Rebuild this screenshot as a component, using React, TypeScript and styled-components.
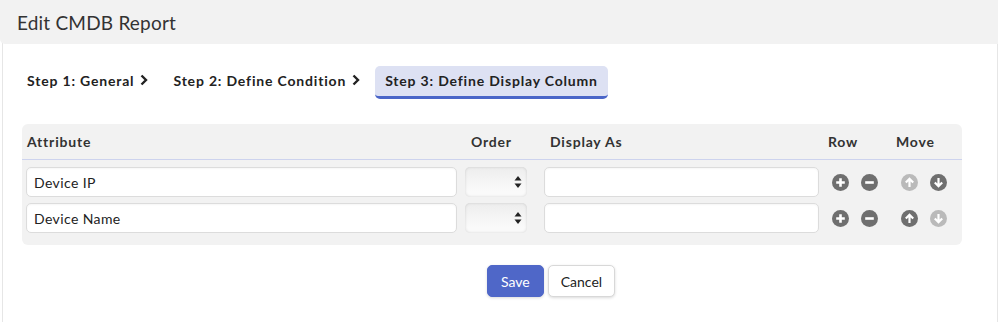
import styled, { createGlobalStyle } from "styled-components";

const GlobalStyle = createGlobalStyle`
  body {
    margin: 0;
    background: #ffffff;
    font-family: "Lato", "Open Sans", sans-serif;
    color: #222;
  }
`;

const Panel = styled.div`
  width: 996px;
  height: 322px;
  margin-left: 2px;
  border-left: 1px solid #e6e6e6;
  border-right: 1px solid #e6e6e6;
  box-sizing: border-box;
`;

const Header = styled.div`
  height: 44px;
  margin-left: -3px;
  margin-right: -1px;
  background: #f2f2f2;
  border-bottom-left-radius: 5px;
  display: flex;
  align-items: center;
  padding-left: 17px;
  font-size: 19px;
  letter-spacing: 0.2px;
  color: #333;
`;

const Steps = styled.div`
  display: flex;
  align-items: center;
  gap: 5px;
  margin: 22px 0 0 14px;
  height: 33px;
`;

const Step = styled.div<{ $active?: boolean }>`
  display: flex;
  align-items: center;
  gap: 6px;
  height: 33px;
  box-sizing: border-box;
  padding: 0 10px 2px;
  font-size: 14px;
  font-weight: 700;
  letter-spacing: 0.82px;
  color: #222;
  border-radius: 5px;
  background: ${(p) => (p.$active ? "#dde1f3" : "transparent")};
  border-bottom: 3px solid ${(p) => (p.$active ? "#4a65c8" : "transparent")};
`;

const Table = styled.div`
  margin: 25px 0 0 19px;
  width: 940px;
  background: #f2f2f2;
  border-radius: 6px;
  padding-bottom: 12px;
`;

const HeadRow = styled.div`
  display: grid;
  grid-template-columns: 443px 79px 284px 68px 1fr;
  height: 35px;
  align-items: center;
  border-bottom: 1px solid #cdd3ee;
  font-size: 14px;
  font-weight: 700;
  letter-spacing: 0.8px;
  color: #333;
`;

const HeadCell = styled.div<{ $pad: number }>`
  padding-left: ${(p) => p.$pad}px;
`;

const Body = styled.div`
  display: flex;
  flex-direction: column;
  gap: 6px;
  padding: 7px 0 0 4px;
`;

const Row = styled.div`
  display: grid;
  grid-template-columns: 439px 79px 288px 69px 1fr;
  align-items: center;
  height: 30px;
`;

const TextInput = styled.div<{ $w: number }>`
  width: ${(p) => p.$w}px;
  height: 30px;
  box-sizing: border-box;
  background: #fff;
  border: 1px solid #dcdcdc;
  border-radius: 5px;
  box-shadow: inset 0 1px 2px rgba(0, 0, 0, 0.04);
  display: flex;
  align-items: center;
  padding-left: 7px;
  font-size: 14px;
  letter-spacing: 0.4px;
  color: #222;
`;

const Select = styled.div`
  width: 62px;
  height: 30px;
  box-sizing: border-box;
  border-radius: 5px;
  background: linear-gradient(#ededed, #fafafa 80%);
  box-shadow: inset 0 0 3px rgba(0, 0, 0, 0.15);
  display: flex;
  align-items: center;
  justify-content: flex-end;
  padding-right: 5px;
`;

const IconGroup = styled.div`
  display: flex;
  gap: 12px;
  align-items: center;
`;

const Actions = styled.div`
  display: flex;
  gap: 4px;
  margin: 20px 0 0 484px;
`;

const Button = styled.div<{ $primary?: boolean }>`
  height: 32px;
  box-sizing: border-box;
  padding: 0 ${(p) => (p.$primary ? 13 : 12)}px;
  display: flex;
  align-items: center;
  border-radius: 5px;
  font-size: 14px;
  color: ${(p) => (p.$primary ? "#fff" : "#222")};
  background: ${(p) => (p.$primary ? "#4f67c8" : "#fff")};
  border: 1px solid ${(p) => (p.$primary ? "#4f67c8" : "#d8d8d8")};
  box-shadow: 0 1px 3px rgba(0, 0, 0, 0.15);
`;

const Chevron = () => (
  <svg width="8" height="12" viewBox="0 0 8 12">
    <path d="M1.5 1.5 L6 6 L1.5 10.5" fill="none" stroke="#222" strokeWidth="2.4" />
  </svg>
);

const Arrows = () => (
  <svg width="8" height="14" viewBox="0 0 8 14">
    <path d="M4 1 L7.5 5.5 H0.5 Z" fill="#222" />
    <path d="M4 13 L7.5 8.5 H0.5 Z" fill="#222" />
  </svg>
);

type IconKind = "plus" | "minus" | "up" | "down";

const CircleIcon = ({ kind, faded }: { kind: IconKind; faded?: boolean }) => (
  <svg width="17" height="17" viewBox="0 0 17 17">
    <circle cx="8.5" cy="8.5" r="8.5" fill={faded ? "#bababa" : "#6f6f6f"} />
    {kind === "plus" && (
      <path d="M8.5 4.2 V12.8 M4.2 8.5 H12.8" stroke="#fff" strokeWidth="2.6" />
    )}
    {kind === "minus" && <path d="M4.2 8.5 H12.8" stroke="#fff" strokeWidth="2.6" />}
    {kind === "up" && (
      <path d="M8.5 13 V5 M4.8 8.6 L8.5 4.8 L12.2 8.6" stroke="#fff" strokeWidth="2.2" fill="none" />
    )}
    {kind === "down" && (
      <path d="M8.5 4 V12 M4.8 8.4 L8.5 12.2 L12.2 8.4" stroke="#fff" strokeWidth="2.2" fill="none" />
    )}
  </svg>
);

const rows = [
  { name: "Device IP", upFaded: true, downFaded: false },
  { name: "Device Name", upFaded: false, downFaded: true },
];

export default function App() {
  return (
    <>
      <GlobalStyle />
      <Panel>
        <Header>Edit CMDB Report</Header>
        <Steps>
          <Step>
            Step 1: General <Chevron />
          </Step>
          <Step>
            Step 2: Define Condition <Chevron />
          </Step>
          <Step $active>Step 3: Define Display Column</Step>
        </Steps>
        <Table>
          <HeadRow>
            <HeadCell $pad={5}>Attribute</HeadCell>
            <HeadCell $pad={6}>Order</HeadCell>
            <HeadCell $pad={6}>Display As</HeadCell>
            <HeadCell $pad={0}>Row</HeadCell>
            <HeadCell $pad={0}>Move</HeadCell>
          </HeadRow>
          <Body>
            {rows.map((r) => (
              <Row key={r.name}>
                <TextInput $w={431}>{r.name}</TextInput>
                <Select>
                  <Arrows />
                </Select>
                <TextInput $w={275} />
                <IconGroup>
                  <CircleIcon kind="plus" />
                  <CircleIcon kind="minus" />
                </IconGroup>
                <IconGroup>
                  <CircleIcon kind="up" faded={r.upFaded} />
                  <CircleIcon kind="down" faded={r.downFaded} />
                </IconGroup>
              </Row>
            ))}
          </Body>
        </Table>
        <Actions>
          <Button $primary>Save</Button>
          <Button>Cancel</Button>
        </Actions>
      </Panel>
    </>
  );
}
